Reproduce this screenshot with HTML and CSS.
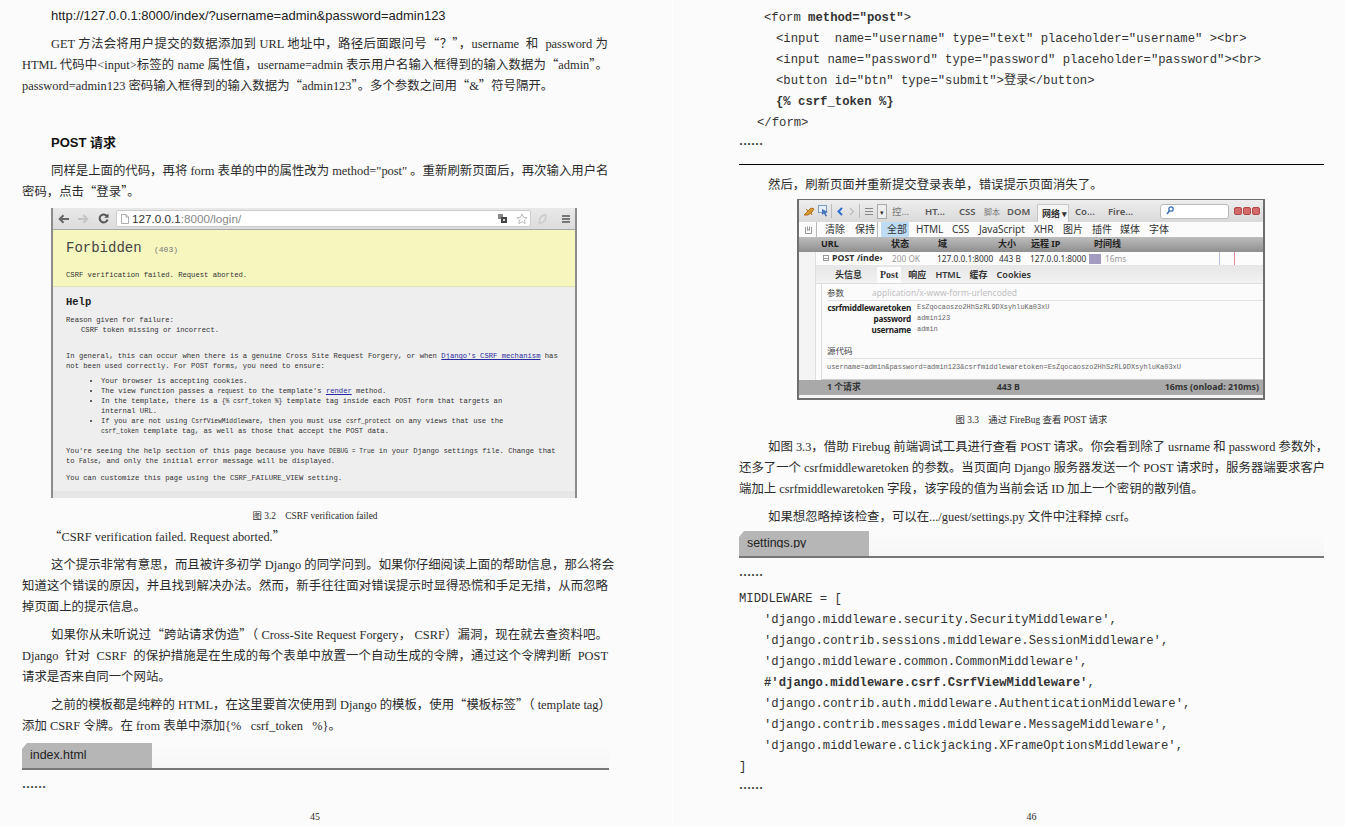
FILE: index.html
```html
<!doctype html>
<html lang="zh-CN">
<head>
	<meta charset="utf-8"/>
	<title>Django CSRF</title>
	<link rel="stylesheet" href="styles.css">
</head>
<body>
<div class="book">

	<!-- page 45 -->
	<section class="page page-left">
		<p class="url">http://127.0.0.1:8000/index/?username=admin&amp;password=admin123</p>

		<p class="para m8">
			<span class="ln in">GET 方法会将用户提交的数据添加到 URL 地址中，路径后面跟问号<span class="q">“</span>？<span class="q">”</span>，username&nbsp; 和&nbsp; password 为</span>
			<span class="ln">HTML 代码中&lt;input&gt;标签的 name 属性值，username=admin 表示用户名输入框得到的输入数据为<span class="q">“</span>admin<span class="q">”</span>。</span>
			<span class="ln end">password=admin123 密码输入框得到的输入数据为<span class="q">“</span>admin123<span class="q">”</span>。多个参数之间用<span class="q">“</span>&amp;<span class="q">”</span>符号隔开。</span>
		</p>

		<h2 class="heading">POST 请求</h2>

		<p class="para m8">
			<span class="ln in">同样是上面的代码，再将 form 表单的中的属性改为 method="post" 。重新刷新页面后，再次输入用户名</span>
			<span class="ln end">密码，点击<span class="q">“</span>登录<span class="q">”</span>。</span>
		</p>

		<figure class="django">
			<div class="chrome-bar">
				<svg class="ci" width="12" height="10" viewBox="0 0 12 10"><path d="M11 5H2M5.5 1.2 1.7 5l3.8 3.8" fill="none" stroke="#666" stroke-width="2"/></svg>
				<svg class="ci fwd" width="12" height="10" viewBox="0 0 12 10"><path d="M1 5h9M6.5 1.2 10.3 5 6.500 8.800" fill="none" stroke="#c4c4c4" stroke-width="2"/></svg>
				<svg class="ci rl" width="11" height="11" viewBox="0 0 11 11"><path d="M9 3.200A4 4 0 1 0 9.500 6.500" fill="none" stroke="#555" stroke-width="2"/><path d="M10.500 .5v4.200H6.300z" fill="#555"/></svg>
				<div class="address">
					<svg width="8" height="10" viewBox="0 0 8 10"><path d="M.5.5h4.500l2.500 2.500v6.500h-7zM5 .5V3h2.500" fill="#fff" stroke="#999" stroke-width=".8"/></svg>
					<span class="host">127.0.0.1<span class="port">:8000/login/</span></span>
					<svg class="tr" width="9" height="9" viewBox="0 0 9 9"><rect x="0" y="0" width="5" height="5" fill="#888"/><rect x="3" y="3" width="6" height="6" fill="#444"/><rect x="5" y="5" width="2" height="2" fill="#ddd"/></svg>
					<svg class="star" width="12" height="12" viewBox="0 0 12 12"><path d="M6 1l1.500 3.300 3.600.4-2.700 2.400.8 3.500L6 8.800 2.800 10.600l.8-3.500L.9 4.700l3.600-.4z" fill="#fff" stroke="#aaa" stroke-width=".8"/></svg>
				</div>
				<svg class="ring" width="9" height="12" viewBox="0 0 9 12"><path d="M7.500 1.500C3 2.500 1 6 1.500 10.500 6 10 8.500 6.500 7.500 1.500z" fill="none" stroke="#ccc" stroke-width="1.500"/></svg>
				<svg class="burger" width="8" height="8" viewBox="0 0 8 8"><path d="M0 1h8M0 4h8M0 7h8" stroke="#555" stroke-width="1.600"/></svg>
			</div>
			<div class="dj-yellow">
				<div class="forbidden">Forbidden <span class="status">(403)</span></div>
				<div class="dj-line failed">CSRF verification failed. Request aborted.</div>
			</div>
			<div class="dj-gray">
				<div class="help">Help</div>
				<div class="dj-block b7">
					<div class="dj-line">Reason given for failure:</div>
					<div class="dj-line nest">CSRF token missing or incorrect.</div>
				</div>
				<div class="dj-block b16">
					<div class="dj-line">In general, this can occur when there is a genuine Cross Site Request Forgery, or when <a class="dj-link">Django's CSRF mechanism</a> has</div>
					<div class="dj-line">not been used correctly. For POST forms, you need to ensure:</div>
				</div>
				<ul class="dj-list">
					<li>Your browser is accepting cookies.</li>
					<li>The view function passes a <span class="tt">request</span> to the template's <a class="dj-link">render</a> method.</li>
					<li>In the template, there is a <span class="tt">{% csrf_token %}</span> template tag inside each POST form that targets an<br>internal URL.</li>
					<li>If you are not using <span class="tt">CsrfViewMiddleware</span>, then you must use <span class="tt">csrf_protect</span> on any views that use the<br><span class="tt">csrf_token</span> template tag, as well as those that accept the POST data.</li>
				</ul>
				<div class="dj-block b10">
					<div class="dj-line">You're seeing the help section of this page because you have <span class="tt">DEBUG = True</span> in your Django settings file. Change that</div>
					<div class="dj-line">to <span class="tt">False</span>, and only the initial error message will be displayed.</div>
				</div>
				<div class="dj-block b7">
					<div class="dj-line">You can customize this page using the CSRF_FAILURE_VIEW setting.</div>
				</div>
			</div>
			<div class="dj-foot"></div>
		</figure>

		<figcaption class="caption cap-left">图 3.2&nbsp;&nbsp;&nbsp; CSRF verification failed</figcaption>

		<p class="para">
			<span class="ln in-q end"><span class="q">“</span>CSRF verification failed. Request aborted.<span class="q">”</span></span>
		</p>

		<p class="para m7">
			<span class="ln in">这个提示非常有意思，而且被许多初学 Django 的同学问到。如果你仔细阅读上面的帮助信息，那么将会</span>
			<span class="ln">知道这个错误的原因，并且找到解决办法。然而，新手往往面对错误提示时显得恐慌和手足无措，从而忽略</span>
			<span class="ln end">掉页面上的提示信息。</span>
		</p>

		<p class="para m7">
			<span class="ln in">如果你从未听说过<span class="q">“</span>跨站请求伪造<span class="q">”</span>（ Cross-Site Request Forgery， CSRF）漏洞，现在就去查资料吧。</span>
			<span class="ln">Django&nbsp; 针对&nbsp; CSRF&nbsp; 的保护措施是在生成的每个表单中放置一个自动生成的令牌，通过这个令牌判断&nbsp; POST</span>
			<span class="ln end">请求是否来自同一个网站。</span>
		</p>

		<p class="para m7">
			<span class="ln in">之前的模板都是纯粹的 HTML，在这里要首次使用到 Django 的模板，使用<span class="q">“</span>模板标签<span class="q">”</span>（ template tag）</span>
			<span class="ln end">添加 CSRF 令牌。在 from 表单中添加{%&nbsp;&nbsp; csrf_token&nbsp;&nbsp; %}。</span>
		</p>

		<div class="file-tab"><span class="file-name">index.html</span></div>
		<div class="dots d-after-tab">……</div>
		<div class="page-no">45</div>
	</section>

	<!-- page 46 -->
	<section class="page page-right">
		<div class="code">
			<div class="cl i-form">&lt;form <b>method="post"</b>&gt;</div>
			<div class="cl i-inner">&lt;input&nbsp; name="username" type="text" placeholder="username" &gt;&lt;br&gt;</div>
			<div class="cl i-inner">&lt;input name="password" type="password" placeholder="password"&gt;&lt;br&gt;</div>
			<div class="cl i-inner">&lt;button id="btn" type="submit"&gt;登录&lt;/button&gt;</div>
			<div class="cl i-inner"><b>{% csrf_token %}</b></div>
			<div class="cl i-close">&lt;/form&gt;</div>
		</div>
		<div class="dots">……</div>
		<hr class="rule">

		<p class="para m10">
			<span class="ln in end">然后，刷新页面并重新提交登录表单，错误提示页面消失了。</span>
		</p>

		<figure class="firebug">
			<div class="fb-tools">
				<svg width="12" height="11" viewBox="0 0 12 11"><path d="M1 9 5 5l3-3 3 1-2 3-4 3zM3 3l2 2M8 7l1 2" fill="#d99a2b" stroke="#b06f1c" stroke-width="1"/></svg>
				<svg width="11" height="12" viewBox="0 0 11 12"><rect x=".5" y=".5" width="8" height="7" fill="#e6eef7" stroke="#7d9cc0"/><path d="M4 4l6 3-2.500.8L9 11l-1.500.5L6 8.500 4 10z" fill="#4477bb"/></svg>
				<span class="fb-div"></span>
				<svg width="6" height="9" viewBox="0 0 6 9"><path d="M5 1 1.500 4.500 5 8" fill="none" stroke="#2c6fd0" stroke-width="2"/></svg>
				<svg width="6" height="9" viewBox="0 0 6 9"><path d="M1 1l3.500 3.500L1 8" fill="none" stroke="#bbb" stroke-width="1.200"/></svg>
				<span class="fb-div"></span>
				<svg width="8" height="7" viewBox="0 0 8 7"><path d="M0 .5h8M0 3.500h8M0 6.500h8" stroke="#888"/></svg>
				<span class="fb-drop">▾</span>
				<span class="t-gray">控...</span>
				<span class="t-bold">HT...</span>
				<span class="t-bold">CSS</span>
				<span class="t-gray small">脚本</span>
				<span class="t-bold">DOM</span>
				<span class="fb-net">网络 ▾</span>
				<span class="t-bold">Co...</span>
				<span class="t-bold">Fire...</span>
				<span class="fb-search"><svg width="8" height="9" viewBox="0 0 8 9"><circle cx="5" cy="3" r="2.200" fill="none" stroke="#3b70b5" stroke-width="1.300"/><path d="M3.500 4.800 1 8" stroke="#3b70b5" stroke-width="1.500"/></svg></span>
				<span class="fb-win"><i></i><i></i><i></i></span>
			</div>
			<div class="fb-filter">
				<svg width="7" height="8" viewBox="0 0 7 8"><path d="M.5 1v6.500h6V1M2.500.5v4l1-1 1 1v-4" fill="none" stroke="#999"/></svg>
				<span class="fb-div"></span>
				<span>清除</span>
				<span>保持</span>
				<span class="fb-div"></span>
				<span class="fb-all">全部</span>
				<span>HTML</span>
				<span>CSS</span>
				<span>JavaScript</span>
				<span>XHR</span>
				<span>图片</span>
				<span>插件</span>
				<span>媒体</span>
				<span>字体</span>
			</div>
			<div class="fb-head">
				<span>URL</span><span>状态</span><span>域</span><span>大小</span><span>远程 IP</span><span>时间线</span>
			</div>
			<div class="fb-body">
				<div class="fb-row">
					<span class="fb-url"><i class="minus"></i>POST /inde›</span>
					<span class="fb-gray">200 OK</span>
					<span>127.0.0.1:8000</span>
					<span>443 B</span>
					<span>127.0.0.1:8000</span>
					<span class="fb-time"><i class="bar"></i><span class="fb-gray">16ms</span><i class="mark m-blue"></i><i class="mark m-red"></i></span>
				</div>
				<div class="fb-tabs">
					<span>头信息</span><span class="on">Post</span><span>响应</span><span>HTML</span><span>缓存</span><span>Cookies</span>
				</div>
				<div class="fb-panel">
					<div class="fb-title">参数<span class="fb-mime">application/x-www-form-urlencoded</span></div>
					<div class="fb-params">
						<b>csrfmiddlewaretoken</b><span>EsZqocaoszo2HhSzRL9DXsyhluKa03xU</span>
						<b>password</b><span>admin123</span>
						<b>username</b><span>admin</span>
					</div>
					<div class="fb-title second">源代码</div>
					<div class="fb-src">username=admin&amp;password=admin123&amp;csrfmiddlewaretoken=EsZqocaoszo2HhSzRL9DXsyhluKa03xU</div>
				</div>
			</div>
			<div class="fb-foot">
				<span>1 个请求</span><span class="fb-size">443 B</span><span class="fb-total">16ms (onload: 210ms)</span>
			</div>
		</figure>

		<figcaption class="caption cap-right">图 3.3&nbsp;&nbsp;&nbsp; 通过 FireBug 查看 POST 请求</figcaption>

		<p class="para m6">
			<span class="ln in">如图 3.3，借助 Firebug 前端调试工具进行查看 POST 请求。你会看到除了 usrname 和 password 参数外，</span>
			<span class="ln">还多了一个 csrfmiddlewaretoken 的参数。当页面向 Django 服务器发送一个 POST 请求时，服务器端要求客户</span>
			<span class="ln end">端加上 csrfmiddlewaretoken 字段，该字段的值为当前会话 ID 加上一个密钥的散列值。</span>
		</p>

		<p class="para m7">
			<span class="ln in end">如果想忽略掉该检查，可以在.../guest/settings.py 文件中注释掉 csrf。</span>
		</p>

		<div class="file-tab tab-right"><span class="file-name"><span class="cut">settings.py</span></span></div>
		<div class="dots d-after-tab">……</div>

		<div class="code settings">
			<div class="cl">MIDDLEWARE = [</div>
			<div class="cl i-mw">'django.middleware.security.SecurityMiddleware',</div>
			<div class="cl i-mw">'django.contrib.sessions.middleware.SessionMiddleware',</div>
			<div class="cl i-mw">'django.middleware.common.CommonMiddleware',</div>
			<div class="cl i-mw"><b>#'django.middleware.csrf.CsrfViewMiddleware'</b>,</div>
			<div class="cl i-mw">'django.contrib.auth.middleware.AuthenticationMiddleware',</div>
			<div class="cl i-mw">'django.contrib.messages.middleware.MessageMiddleware',</div>
			<div class="cl i-mw">'django.middleware.clickjacking.XFrameOptionsMiddleware',</div>
			<div class="cl">]</div>
		</div>
		<div class="dots">……</div>
		<div class="page-no">46</div>
	</section>
</div>
</body>
</html>
```
FILE: styles.css
```css
* {
	box-sizing: border-box;
}
html, body {
	margin: 0;
	height: 827px;
	overflow: hidden;
	background: #fff;
}
body {
	font-family: "Liberation Serif", "Noto Sans CJK SC", serif;
	font-size: 12.4px;
	color: #2b2b2b;
}
.book {
	display: flex;
	gap: 1px;
	height: 827px;
}
.page {
	width: 672px;
	height: 827px;
	background: #fbfbfb;
	display: flex;
	flex-direction: column;
}
.page-left {
	padding: 5px 64px 0 22px;
}
.page-right {
	padding: 8px 21px 0 66px;
}

/* body text, every printed line is its own block so the breaks stay put */
.para {
	margin: 0;
}
.m6 { margin-top: 6px; }
.m7 { margin-top: 7px; }
.m8 { margin-top: 8px; }
.m10 { margin-top: 10px; }
.ln {
	display: block;
	height: 21px;
	line-height: 21px;
	text-align: justify;
	text-align-last: justify;
	white-space: nowrap;
}
.ln.end {
	text-align-last: left;
}
.ln.in {
	padding-left: 29px;
}
.ln.in-q {
	padding-left: 27px;
}
/* the printed quotes are full width */
.q {
	font-family: "Noto Sans CJK SC", sans-serif;
	line-height: 0;
}
.url {
	margin: 0;
	padding-left: 29px;
	font-family: "Liberation Sans", sans-serif;
	font-size: 13px;
	line-height: 21px;
	color: #222;
}
.heading {
	margin: 35px 0 0;
	padding-left: 29px;
	font-family: "Liberation Sans", "Noto Sans CJK SC", sans-serif;
	font-size: 13px;
	font-weight: bold;
	line-height: 21px;
	color: #111;
}
.caption {
	font-size: 9.4px;
	line-height: 21px;
	height: 21px;
	text-align: center;
}
.cap-left { margin-top: 8px; }
.cap-right { margin-top: 10px; }
.dots {
	height: 14px;
	line-height: 14px;
	font-size: 12px;
	font-weight: bold;
	color: #333;
}
.d-after-tab {
	margin-top: 7px;
}
.page-no {
	margin-top: auto;
	height: 21px;
	line-height: 21px;
	margin-bottom: 0;
	text-align: center;
	font-size: 10px;
}

/* grey file tab with the long rule */
.file-tab {
	margin-top: 6px;
	height: 27px;
	width: 587px;
	border-bottom: 2px solid #777;
	background: linear-gradient(to bottom, #fbfbfb, #f6f6f6);
}
.tab-right {
	margin-top: 3px;
	width: 585px;
}
.file-name {
	display: block;
	width: 130px;
	height: 25px;
	padding-left: 8px;
	background: #b6b6b6;
	clip-path: polygon(5px 0, 100% 0, 100% 100%, 0 100%, 0 6px);
	font-family: "Liberation Sans", sans-serif;
	font-size: 12.4px;
	line-height: 24px;
	color: #222;
}
/* the descenders of this label are cut off in the print */
.cut {
	display: block;
	clip-path: inset(0 0 7px 0);
}

/* code */
.code {
	font-family: "Liberation Mono", "Noto Sans CJK SC", monospace;
	font-size: 12.25px;
	color: #333;
}
.cl {
	height: 21px;
	line-height: 21px;
	white-space: pre;
}
.i-form { padding-left: 25px; }
.i-inner { padding-left: 37px; }
.i-close { padding-left: 18px; }
.i-mw { padding-left: 25px; }
.settings {
	margin-top: 10px;
}
.rule {
	margin: 16px 0 0;
	border: 0;
	height: 1px;
	flex: none;
	background: #000;
}

/* Django error page screenshot */
.django {
	margin: 5px 0 0 29px;
	width: 526px;
	height: 290px;
	flex: none;
	display: flex;
	flex-direction: column;
	border-left: 2px solid #8c8c8c;
	border-right: 2px solid #8c8c8c;
	font-family: "Liberation Mono", monospace;
	font-size: 7.2px;
	color: #333;
}
.chrome-bar {
	height: 22px;
	flex: none;
	display: flex;
	align-items: center;
	padding-left: 5px;
	background: linear-gradient(to bottom, #e9e9e9, #dcdcdc);
	border-bottom: 1px solid #a8a8a8;
}
.ci { margin-right: 6px; }
.fwd { margin-left: 1px; }
.rl { margin-left: 3px; }
.address {
	width: 415px;
	height: 17px;
	margin-left: 1px;
	display: flex;
	align-items: center;
	padding-left: 4px;
	background: #fff;
	border: 1px solid #ccc;
	border-radius: 2px;
}
.host {
	margin-left: 3px;
	font-family: "Liberation Sans", sans-serif;
	font-size: 11.7px;
	color: #333;
}
.port {
	color: #888;
}
.tr { margin-left: auto; margin-right: 4px; }
.star { margin: 0 2px 0 5px; }
.ring { margin-left: 7px; }
.burger { margin-left: 15px; }
.dj-yellow {
	height: 57px;
	flex: none;
	padding: 9px 0 0 13px;
	background: #f6f6bf;
	border-bottom: 1px solid #e2e2b8;
}
.forbidden {
	height: 18px;
	line-height: 18px;
	font-size: 14px;
	color: #444;
}
.status {
	font-size: 8px;
	color: #777;
	margin-left: 4px;
}
.failed {
	margin-top: 13px;
}
.dj-gray {
	flex: 1;
	padding: 9px 0 0 13px;
	background: #eeeeee;
}
.help {
	height: 12px;
	line-height: 12px;
	font-size: 10.500px;
	font-weight: bold;
	color: #222;
}
.dj-line {
	height: 10px;
	line-height: 10px;
	white-space: nowrap;
}
.nest { padding-left: 15px; }
.b7 { margin-top: 7px; }
.b10 { margin-top: 10px; }
.b16 { margin-top: 16px; }
.dj-link {
	color: #2a2aa0;
	text-decoration: underline;
}
.tt {
	font-size: 6.300px;
	line-height: 0;
}
.dj-list {
	margin: 5px 0 0;
	padding-left: 35px;
	line-height: 10px;
	white-space: nowrap;
}
.dj-foot {
	height: 7px;
	flex: none;
	background: #e6e6e6;
}

/* Firebug screenshot */
.firebug {
	margin: 3px 0 0 58px;
	width: 468px;
	height: 201px;
	flex: none;
	display: flex;
	flex-direction: column;
	border: 2px solid #6e6e6e;
	border-width: 1px 2px 2px;
	background: #f4f4f4;
	font-family: "Noto Sans", "Noto Sans CJK SC", sans-serif;
	font-size: 10px;
	color: #333;
}
.fb-tools {
	height: 22px;
	flex: none;
	display: grid;
	grid-template-columns: 15px 13px 6px 12px 10px 6px 12px 15px 33px 34px 25px 23px 30px 38px 33px 52px 74px 30px;
	align-items: center;
	padding-left: 4px;
	background: linear-gradient(to bottom, #eeeeee, #d9d9d9);
	font-size: 9.500px;
	white-space: nowrap;
}
.fb-div {
	width: 1px;
	height: 14px;
	background: #bbb;
}
.t-gray { color: #777; }
.t-bold { color: #555; font-weight: 600; }
.small { font-size: 8px; }
.fb-drop {
	width: 10px;
	height: 15px;
	font-size: 7px;
	line-height: 15px;
	text-align: center;
	background: #eee;
	border: 1px solid #aaa;
}
.fb-net {
	width: 32px;
	height: 18px;
	margin-top: 4px;
	padding-left: 4px;
	line-height: 18px;
	font-size: 9px;
	font-weight: bold;
	background: #f5f5f5;
	border: 1px solid #c4c4c4;
	border-bottom: 0;
	border-radius: 2px 2px 0 0;
}
.fb-search {
	width: 69px;
	height: 15px;
	padding-left: 5px;
	background: #fff;
	border: 1px solid #bbb;
	border-radius: 3px;
}
.fb-win {
	display: flex;
	gap: 1px;
}
.fb-win i {
	width: 8px;
	height: 8px;
	background: #d26a6a;
	border: 1px solid #b04a4a;
	border-radius: 2px;
}
.fb-filter {
	height: 15px;
	flex: none;
	display: grid;
	grid-template-columns: 11px 9px 30px 22px 4px 35px 36px 27px 55px 29px 29px 28px 29px 20px;
	align-items: center;
	padding-left: 6px;
	background: #fbfbfb;
	white-space: nowrap;
	line-height: 15px;
}
.fb-filter .fb-div {
	height: 15px;
}
.fb-all {
	height: 15px;
	width: 28px;
	padding-left: 6px;
	background: #bedcf3;
}
.fb-head {
	height: 15px;
	flex: none;
	display: grid;
	grid-template-columns: 70px 47px 60px 33px 63px 1fr;
	padding-left: 22px;
	line-height: 14px;
	background: linear-gradient(to bottom, #bdbdbd, #8f8f8f);
	font-size: 9px;
	font-weight: bold;
	color: #222;
}
.fb-body {
	flex: 1;
	display: flex;
	flex-direction: column;
	margin-left: 16px;
	background: #fbfbfb;
	border-left: 1px solid #ddd;
}
.fb-row {
	height: 13px;
	flex: none;
	display: grid;
	grid-template-columns: 69px 45px 62px 31px 59px 1fr;
	padding-left: 7px;
	line-height: 13px;
	font-size: 8.300px;
	white-space: nowrap;
	background: #fcfcfc;
}
.fb-url {
	font-weight: bold;
	font-size: 8.800px;
	white-space: nowrap;
}
.minus {
	display: inline-block;
	width: 6px;
	height: 6px;
	margin-right: 3px;
	border: 1px solid #999;
	background: linear-gradient(#999, #999) center / 4px 1px no-repeat;
}
.fb-gray { color: #999; }
.fb-time {
	position: relative;
}
.bar {
	display: inline-block;
	width: 12px;
	height: 10px;
	margin-right: 4px;
	vertical-align: -2px;
	background: #a49cc0;
}
.mark {
	position: absolute;
	top: 0;
	width: 1px;
	height: 13px;
}
.m-blue { left: 130px; background: #b8bede; }
.m-red { left: 145px; background: #e58b97; }
.fb-tabs {
	height: 19px;
	flex: none;
	display: flex;
	align-items: flex-end;
	padding-left: 19px;
	background: linear-gradient(to bottom, #e6e6e6, #f2f2f2);
	border-bottom: 1px solid #ddd;
	font-size: 9px;
	font-weight: 600;
	line-height: 16px;
}
.fb-tabs span {
	margin-right: 9px;
}
.fb-tabs .on {
	margin: 0 7px 0 6px;
	padding: 0 3px;
	background: #fbfbfb;
	font-family: "Liberation Serif", serif;
	font-size: 10px;
	font-weight: bold;
}
.fb-panel {
	margin-left: 5px;
	height: 96px;
	flex: none;
	padding: 2px 0 0 5px;
	background: #fbfbfb;
	border-left: 1px solid #ddd;
	border-bottom: 1px solid #ccc;
}
.fb-title {
	height: 15px;
	line-height: 13px;
	font-size: 8.500px;
	border-bottom: 1px solid #e2e2e2;
	color: #444;
}
.fb-title.second {
	margin-top: 9px;
}
.fb-mime {
	margin-left: 28px;
	color: #c0c0c0;
}
.fb-params {
	margin-top: 1px;
	display: grid;
	grid-template-columns: 84px 1fr;
	column-gap: 6px;
	line-height: 11px;
}
.fb-params b {
	text-align: right;
	font-size: 8.200px;
	color: #222;
	letter-spacing: -0.2px;
}
.fb-params span,
.fb-src {
	font-family: "Liberation Mono", monospace;
	font-size: 6.900px;
	color: #666;
}
.fb-src {
	margin-top: 3px;
	line-height: 11px;
	white-space: nowrap;
	font-size: 6.950px;
}
.fb-foot {
	height: 15px;
	flex: none;
	margin-bottom: 3px;
	display: flex;
	padding-left: 28px;
	background: #a9a9a9;
	font-size: 8.800px;
	font-weight: bold;
	line-height: 15px;
	color: #333;
}
.fb-size {
	margin-left: 136px;
}
.fb-total {
	margin-left: auto;
	margin-right: 4px;
}
```
